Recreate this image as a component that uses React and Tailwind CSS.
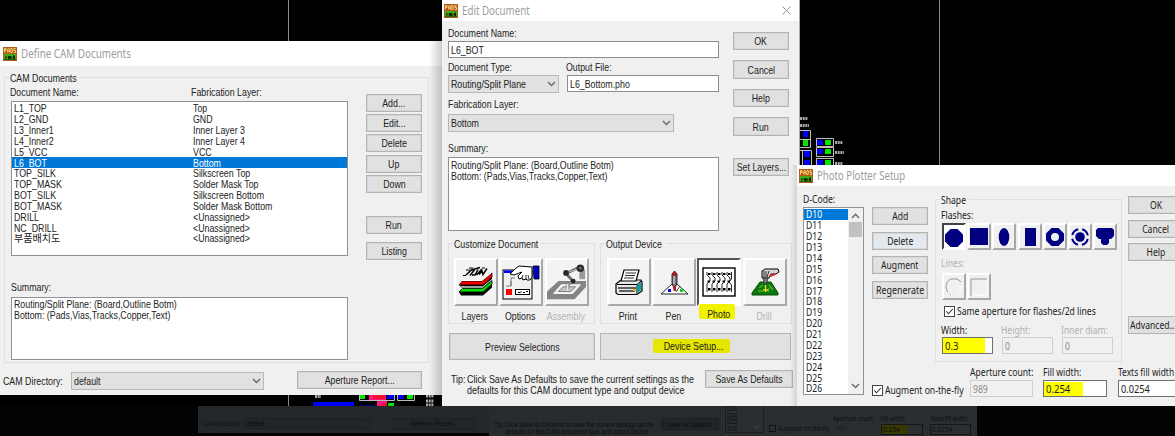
import React from "react";
import clsx from "clsx";

/* ---------- text ---------- */
const T = ({ children, className = "scale-x-[0.84]", origin = "origin-left" }) => (
  <span className={clsx("inline-block whitespace-pre", origin, className)}>{children}</span>
);

/* ---------- basic controls ---------- */
const Button = ({ children, className, text }) => (
  <div className={clsx("flex shrink-0 items-center justify-center border border-[#b4b4b4] bg-[#e1e1e1] shadow-[inset_0_0_0_1px_#d6d6d6]", className)}>
    <T origin="origin-center" className={text}>{children}</T>
  </div>
);

const Field = ({ children, className, text }) => (
  <div className={clsx("flex shrink-0 items-center border pl-[2px]", className)}>
    <T className={text}>{children}</T>
  </div>
);

const Chevron = ({ up, className }) => (
  <svg className={className} width="9" height="6" viewBox="0 0 9 6" fill="none" stroke="#6a6a6a" strokeWidth="1.4">
    <path d={up ? "M1 5 4.500 1.200 8 5" : "M1 1 4.500 4.600 8 1"} />
  </svg>
);

const Select = ({ children, className }) => (
  <div className={clsx("flex shrink-0 items-center justify-between border border-[#b8b8b8] bg-[#e1e1e1] pl-[2px] pr-[2px]", className)}>
    <T>{children}</T>
    <Chevron />
  </div>
);

const Check = ({ children, text }) => (
  <div className="flex h-[12px] items-center gap-[2px]">
    <svg className="shrink-0" width="11" height="11" viewBox="0 0 11 11">
      <rect x=".5" y=".5" width="10" height="10" fill="#fff" stroke="#444" />
      <path d="M2.300 5.400 4.500 7.800 8.800 3" fill="none" stroke="#333" strokeWidth="1.100" />
    </svg>
    <T className={text}>{children}</T>
  </div>
);

const PadsIcon = () => (
  <svg width="14" height="14" viewBox="0 0 14 14" className="shrink-0">
    <rect width="14" height="14" fill="#b4581c" />
    <rect x="1" y="7" width="12" height="6" fill="#3fae12" />
    <path d="M1.500 5.500V1.500H3V3.500H1.500M4.700 5.500V2L5.500 1.500 6.300 2V5.500M4.700 4H6.300M7.800 1.500V5.500H9L9.600 4.500V2.500L9 1.500ZM12.500 1.500H11V3.500H12.500V5.500H11" fill="none" stroke="#ffdf7a" strokeWidth=".9" />
    <path d="M2 9.500H3.500V11.500H2ZM5 9H8.500V12H5ZM10 8.500H12V12.500H10Z" fill="#142a08" />
    <path d="M3.500 10H5M8.500 10.500H10M1 12.500H13" stroke="#1a4a0a" strokeWidth=".7" />
  </svg>
);

const TitleBar = ({ title, className, text, close }) => (
  <div className={clsx("flex shrink-0 items-center bg-white text-[12px] text-[#9d9d9d] font-['Noto_Sans',sans-serif]", className)}>
    <PadsIcon />
    <div className="ml-[4px] flex-1">
      <T className={text}>{title}</T>
    </div>
    {close && (
      <svg width="9" height="9" viewBox="0 0 9 9" className="mr-[8px]" stroke="#8c8c8c" strokeWidth="1">
        <path d="M.5.5 8.500 8.500M8.500.5.5 8.500" />
      </svg>
    )}
  </div>
);

const Group = ({ label, className, children, text, labelWidth }) => (
  <div className={clsx("flex shrink-0 flex-col border border-[#dfdfdf]", className)}>
    <div className={clsx("-mt-[6px] ml-[5px] flex h-[12px] shrink-0 items-center bg-[#f0f0f0]", labelWidth)}>
      <T className={text}>{label}</T>
    </div>
    {children}
  </div>
);

/* ---------- CAM documents window ---------- */
const docs = [
  ["L1_TOP", "Top"],
  ["L2_GND", "GND"],
  ["L3_Inner1", "Inner Layer 3"],
  ["L4_Inner2", "Inner Layer 4"],
  ["L5_VCC", "VCC"],
  ["L6_BOT", "Bottom"],
  ["TOP_SILK", "Silkscreen Top"],
  ["TOP_MASK", "Solder Mask Top"],
  ["BOT_SILK", "Silkscreen Bottom"],
  ["BOT_MASK", "Solder Mask Bottom"],
  ["DRILL", "<Unassigned>"],
  ["NC_DRILL", "<Unassigned>"],
  ["부품배치도", "<Unassigned>"],
];

const CamDocuments = () => (
  <div className="absolute left-0 top-[41px] flex h-[354px] w-[442px] flex-col bg-[#f0f0f0]">
    <TitleBar title="Define CAM Documents" className="h-[25px] pl-[3px]" text="scale-x-[0.82]" />
    <Group label="CAM Documents" labelWidth="w-[69px]" className="ml-[4px] mt-[11px] h-[286px] w-[425px]">
      <div className="flex">
        <div className="ml-[6px] flex w-[337px] flex-col">
          <div className="mt-[2px] flex h-[12px] items-center">
            <div className="-ml-px w-[181px]"><T>Document Name:</T></div>
            <T>Fabrication Layer:</T>
          </div>
          <div className="mt-[3px] h-[155px] border border-[#8d9198] bg-white pt-px leading-[10px]">
            {docs.map(([name, layer], i) => (
              <div key={name} className={clsx("flex h-[10.84px] items-center pl-[2px]", i === 5 && "bg-[#0078d7] text-white")}>
                <div className="w-[179px]"><T className={i === 12 ? "scale-x-[0.96]" : undefined}>{name}</T></div>
                <T>{layer}</T>
              </div>
            ))}
          </div>
          <div className="mt-[25px] flex h-[12px] items-center"><T>Summary:</T></div>
          <div className="mt-[4px] flex h-[63px] flex-col border border-[#8d9198] bg-white pl-[2px] pt-px leading-[11px]">
            <T>Routing/Split Plane: (Board,Outline Botm)</T>
            <T>Bottom: (Pads,Vias,Tracks,Copper,Text)</T>
          </div>
        </div>
        <div className="ml-[18px] mt-[10px] flex flex-col">
          <Button className="h-[18px] w-[56px]">Add...</Button>
          <Button className="mt-[2px] h-[18px] w-[56px]">Edit...</Button>
          <Button className="mt-[2px] h-[18px] w-[56px]">Delete</Button>
          <Button className="mt-[3px] h-[18px] w-[56px]">Up</Button>
          <Button className="mt-[2px] h-[18px] w-[56px]">Down</Button>
          <Button className="mt-[23px] h-[18px] w-[56px]">Run</Button>
          <Button className="mt-[8px] h-[18px] w-[56px]">Listing</Button>
        </div>
      </div>
    </Group>
    <div className="mt-[8px] flex pl-[3px]">
      <div className="flex w-[68px] items-center"><T>CAM Directory:</T></div>
      <Select className="mt-px h-[18px] w-[193px]">default</Select>
      <Button className="ml-[33px] h-[18px] w-[125px]">Aperture Report...</Button>
    </div>
    <div className="absolute right-0 top-0 h-full w-[13px] bg-linear-to-r from-black/0 to-black/20" />
  </div>
);

/* ---------- tool icons ---------- */
const LayersIcon = () => (
  <svg width="36" height="34" viewBox="0 0 36 34">
    <path d="M1 27H25L34 19V22.500L25 30.500H3Z" fill="#000" />
    <path d="M1 27 4.500 23.500H24.500L34 15.500V19L25 27Z" fill="#00e000" stroke="#000" strokeWidth=".8" />
    <path d="M2 20H25L34 12V15.500L25 22.500H3Z" fill="#000" />
    <path d="M3 21.800H24.800L34 14.400" stroke="#fff" strokeWidth=".9" fill="none" />
    <path d="M1 20 4.500 16H24L34 8V12L25 20Z" fill="#f00000" stroke="#000" strokeWidth=".8" />
    <path d="M4 15.500H24L33 8" stroke="#fff" fill="none" />
    <path d="M8 10 14 4.500 16 5.500 12 10.500M14 10H17L20 4.500M15 4.500 22 2.500M18.500 10 24 4M21 9.500 24 6 25 9.500 29 3.500" fill="none" stroke="#000" strokeWidth="1.500" />
    <path d="M8 5H12M11 3H15M24 3H27M5 10.500H8" stroke="#000" />
  </svg>
);

const OptionsIcon = () => (
  <svg width="38" height="36" viewBox="0 0 38 36">
    <rect x="1" y="6" width="29" height="29" fill="#f0f0f0" stroke="#000" />
    <path d="M2 6.500H12V9H2Z" fill="#00f" />
    <path d="M4 22H9V17M9 22V14H13" fill="none" stroke="#777" />
    <rect x="4" y="25" width="6" height="6" fill="#f00" />
    <rect x="13.500" y="25.500" width="14" height="5" fill="#fff" stroke="#000" />
    <path d="M16 28.500H18M19 27.500V29M21 28.500H23M24 27.500H26" stroke="#000" />
    <path d="M8 10 13 5 17 2 30 3V13L28 16H25L24 15 21 16 20 14 17 15 16 12 20 8 12 11Z" fill="#fff" stroke="#000" />
    <path d="M20 14 21 11M24 15 24 11M27 15 26 11" stroke="#000" strokeWidth=".8" />
    <path d="M31 2H37V15H32Z" fill="#0000e0" stroke="#000" strokeWidth=".8" />
    <path d="M34 2V15" stroke="#000070" />
  </svg>
);

const AssemblyIcon = () => (
  <svg width="42" height="38" viewBox="0 0 42 38">
    <path d="M0 29 12 18H41V24L29 37H0Z" fill="#858585" />
    <path d="M7 31 15 22H35L27 31Z" fill="#eee" stroke="#fff" />
    <path d="M12 29 17 24H30L25 29Z" fill="#c4c4c4" stroke="#666" strokeWidth=".8" />
    <path d="M34 6H40V16H34Z" fill="#999" />
    <path d="M20 10 35 3M20 10 27 18 22 22" fill="none" stroke="#6c6c6c" strokeWidth="3" />
    <path d="M22 9 35 4M27 18 22 22" fill="none" stroke="#c7c7c7" strokeWidth="1" />
    <circle cx="20" cy="9.500" r="3" fill="#282828" />
    <circle cx="35" cy="4.500" r="4" fill="#303030" />
    <circle cx="27.500" cy="18" r="2.500" fill="#222" />
    <circle cx="35" cy="4.500" r="1.200" fill="#888" />
    <path d="M21.500 21V28" stroke="#f5f5f5" strokeWidth="2" />
    <path d="M20.500 21V27M23 21V27" stroke="#777" strokeWidth=".6" />
  </svg>
);

const PrintIcon = () => (
  <svg width="28" height="27" viewBox="0 0 28 27">
    <path d="M1 15 6 11H26L27 13V22L22 25.500H3L1 24Z" fill="#e8e8e8" stroke="#000" strokeWidth="1.200" />
    <path d="M6 12 9 1H24L21 12Z" fill="#fff" stroke="#000" strokeWidth="1.200" />
    <path d="M10.500 4H21M10 6.500H20M9 9H19" stroke="#333" />
    <path d="M2 15.500H22L26 12M22 15.500V25" fill="none" stroke="#000" />
    <path d="M22.500 16 26 13V21L22.500 24Z" fill="#00a0a8" />
    <path d="M3 19H21M4 22H20" stroke="#333" strokeWidth="1.400" />
    <rect x="18" y="20" width="3" height="2" fill="#ddc71e" />
  </svg>
);

const PenIcon = () => (
  <svg width="29" height="25" viewBox="0 0 29 25">
    <path d="M1 24 12 14H17L28 24Z" fill="#fff" stroke="#222" />
    <path d="M12 4 14.500 1 17 4V13L14.500 20 12 13Z" fill="#777" stroke="#000" strokeWidth=".8" />
    <path d="M13 2H16V6H13ZM13.500 16H16V21H13.500Z" fill="#c1121e" />
    <path d="M14 6V14" stroke="#ddd" />
    <rect x="8" y="19" width="3" height="3" fill="#00f" />
    <rect x="20" y="19" width="3" height="3" fill="#00d800" />
    <path d="M16 22 20 16" stroke="#444" />
  </svg>
);

const PhotoIcon = () => (
  <svg width="34" height="30" viewBox="0 0 34 30" className="shrink-0">
    <rect x="1" y="1" width="32" height="28" fill="#fff" stroke="#000" strokeWidth="1.400" />
    <path d="M5 5V8L8 11V14L5 17V25M10 5V8L13 11V14L10 17V25M15 5V8L18 11V14L15 17V25M20 5V8L23 11V14L20 17V25M25 5V8L28 11V14L25 17V25M29.500 5V12L27 15 29.500 18V25" stroke="#111" fill="none" strokeWidth=".9" />
    {[7, 12, 17, 22, 27].map((x) => (
      <path key={x} d={`M${x - 1} 6h2.500v2h-2.500zM${x - 1.5} 13.500h2.500v2h-2.500zM${x - 1} 21h2.500v2.500h-2.500z`} fill="#000" />
    ))}
  </svg>
);

const DrillIcon = () => (
  <svg width="29" height="28" viewBox="0 0 29 28">
    <path d="M1 25 9 14H20L27 25V27H1Z" fill="#08780a" stroke="#064c08" />
    <path d="M8 20 12 17M18 17 22 22M7 23H12M18 20 17 24" stroke="#4caf2a" strokeWidth="1.500" />
    <path d="M11 3 14 1H27L28 4 25 6H20L18 10H11Z" fill="#d5d5d5" stroke="#000" />
    <path d="M13 3V9M15 3V9M18 3 16 9" stroke="#333" />
    <path d="M19 8 24 6" stroke="#e01e28" strokeWidth="2" />
    <path d="M12 10H17L16 14 14.500 18 13 14Z" fill="#777" stroke="#222" strokeWidth=".7" />
    <path d="M14.500 17V24M12 22H17" stroke="#e7d619" strokeWidth="1.500" />
  </svg>
);

const Tool = ({ icon, label, pressed, disabled, marked, width }) => (
  <div className={clsx("flex shrink-0 flex-col", width)}>
    <div
      className={clsx(
        "flex h-[48px] w-[44px] shrink-0 items-center justify-center border-2",
        pressed ? "border-b-white border-l-[#555] border-r-white border-t-[#555] bg-white" : "border-b-[#a8a8a8] border-l-white border-r-[#a8a8a8] border-t-white bg-[#f3f3f3]",
      )}
    >
      {icon}
    </div>
    <div
      className={clsx(
        "relative flex h-[15px] w-[36px] items-center justify-center",
        disabled && "text-[#b5b5b5]",
        marked ? "-mt-[2px] ml-[2px] rounded-[2px] bg-[#f2f200] pl-[4px] pt-[7px] pb-[2px]" : "ml-[3px] pt-[5px]",
      )}
    >
      <T origin="origin-center">{label}</T>
    </div>
  </div>
);

/* ---------- edit document window ---------- */
const EditDocument = () => (
  <div className="absolute left-[442px] top-0 flex h-[406px] w-[358px] flex-col border-r border-[#a9a9a9] bg-[#f0f0f0]">
    <TitleBar title="Edit Document" className="h-[21px] pl-[2px]" text="scale-x-[0.81]" close />
    <div className="flex pl-[6px]">
      <div className="flex w-[271px] flex-col">
        <div className="mt-[6px] flex h-[12px] items-center"><T>Document Name:</T></div>
        <Field className="mt-[2px] h-[17px] border-[#8d8d8d] bg-white">L6_BOT</Field>
        <div className="mt-[3px] flex h-[12px] items-center">
          <div className="w-[118px]"><T>Document Type:</T></div>
          <T>Output File:</T>
        </div>
        <div className="mt-[2px] flex">
          <Select className="h-[18px] w-[111px]">Routing/Split Plane</Select>
          <Field className="ml-[8px] h-[17px] w-[152px] border-[#8d8d8d] bg-white">L6_Bottom.pho</Field>
        </div>
        <div className="mt-[5px] flex h-[12px] items-center"><T>Fabrication Layer:</T></div>
        <Select className="mt-[4px] h-[18px] w-[226px]">Bottom</Select>
        <div className="mt-[10px] flex h-[12px] items-center"><T>Summary:</T></div>
        <div className="mt-[3px] flex h-[74px] flex-col border border-[#8d9198] bg-white pl-[2px] pt-[2px] leading-[11px]">
          <T>Routing/Split Plane: (Board,Outline Botm)</T>
          <T>Bottom: (Pads,Vias,Tracks,Copper,Text)</T>
        </div>
      </div>
      <div className="ml-[14px] mt-[11px] flex flex-col">
        <Button className="h-[18px] w-[56px]">OK</Button>
        <Button className="mt-[10px] h-[19px] w-[56px]">Cancel</Button>
        <Button className="mt-[10px] h-[18px] w-[56px]">Help</Button>
        <Button className="mt-[10px] h-[19px] w-[56px]">Run</Button>
        <Button className="mt-[22px] h-[18px] w-[56px]">Set Layers...</Button>
      </div>
    </div>
    <div className="mt-[12px] flex gap-[5px] pl-[6px]">
      <Group label="Customize Document" labelWidth="w-[86px]" className="h-[81px] w-[147px]">
        <div className="mt-[8px] flex pl-[5px]">
          <Tool icon={<LayersIcon />} label="Layers" width="w-[45px]" />
          <Tool icon={<OptionsIcon />} label="Options" width="w-[46px]" />
          <Tool icon={<AssemblyIcon />} label="Assembly" width="w-[44px]" disabled />
        </div>
      </Group>
      <Group label="Output Device" labelWidth="w-[60px]" className="h-[81px] w-[192px]">
        <div className="mt-[8px] flex pl-[6px]">
          <Tool icon={<PrintIcon />} label="Print" width="w-[45px]" />
          <Tool icon={<PenIcon />} label="Pen" width="w-[45px]" />
          <Tool icon={<PhotoIcon />} label="Photo" width="w-[46px]" pressed marked />
          <Tool icon={<DrillIcon />} label="Drill" width="w-[44px]" disabled />
        </div>
      </Group>
    </div>
    <div className="mt-[9px] flex gap-[5px] pl-[7px]">
      <Button className="h-[27px] w-[146px]">Preview Selections</Button>
      <div className="flex h-[27px] w-[191px] items-center justify-center border border-[#b4b4b4] bg-[#e1e1e1]">
        <div className="-mt-px mr-[9px] flex h-[14px] w-[77px] items-center justify-center rounded-[2px] bg-[#e6e600] pl-[6px]">
          <T origin="origin-center">Device Setup...</T>
        </div>
      </div>
    </div>
    <div className="flex pl-[9px]">
      <div className="mt-[14px] flex w-[16px] flex-col leading-[11px]"><T>Tip:</T></div>
      <div className="mt-[14px] flex w-[238px] flex-col leading-[11px]">
        <T className="scale-x-[0.853]">Click Save As Defaults to save the current settings as the</T>
        <T className="scale-x-[0.853]">defaults for this CAM document type and output device</T>
      </div>
      <Button className="mt-[10px] h-[18px] w-[88px]">Save As Defaults</Button>
    </div>
    <div className="absolute right-0 top-[165px] h-[241px] w-[9px] bg-linear-to-r from-black/0 to-black/15" />
  </div>
);

/* ---------- photo plotter window ---------- */
const codes = Array.from({ length: 17 }, (_, i) => `D${i + 10}`);

const shapes = [
  <path d="M5.500 0H12.500L18 5.500V12.500L12.500 18H5.500L0 12.500V5.500Z" />,
  <rect x="0" y="0" width="18" height="17" />,
  <ellipse cx="9" cy="9" rx="5.300" ry="9" />,
  <rect x="4" y="0" width="11" height="18" />,
  <path fillRule="evenodd" d="M5.500 0H12.500L18 5.500V12.500L12.500 18H5.500L0 12.500V5.500ZM9 5A4 4 0 1 0 9 13 4 4 0 1 0 9 5Z" />,
  <g>
    <circle cx="9" cy="9" r="4.800" />
    <circle cx="9" cy="9" r="8" fill="none" stroke="#000080" strokeWidth="2" strokeDasharray="8.560 4" strokeDashoffset="-2" />
  </g>,
  <path d="M2 0H16L18 2V8L15 11H13V15L11 17H7L5 15V11H3L0 8V2Z" />,
];

const Raised = ({ pressed, children }) => (
  <div className={clsx("flex h-[27px] w-[24px] shrink-0 items-center justify-center border-2", pressed ? "border-b-white border-l-[#444] border-r-white border-t-[#444] bg-white pt-[2px]" : "border-b-[#a8a8a8] border-l-white border-r-[#a8a8a8] border-t-white bg-[#f0f0f0]")}>
    {children}
  </div>
);

const N = "scale-x-[0.86]";

const PhotoPlotter = () => (
  <div className="absolute left-[797px] top-[165px] flex h-[241px] w-[378px] flex-col bg-[#f0f0f0]">
    <TitleBar title="Photo Plotter Setup" className="h-[21px] pl-[2px]" text="scale-x-[0.80]" />
    <div className="flex font-['Noto_Sans',sans-serif] text-[10px]">
      <div className="ml-[6px] flex w-[61px] shrink-0 flex-col">
        <div className="mt-[7px] flex h-[12px] items-center"><T className={N}>D-Code:</T></div>
        <div className="mt-[2px] flex h-[188px] border border-[#8d9198] bg-white leading-[10px]">
          <div className="flex w-[44px] flex-col pt-px">
            {codes.map((c, i) => (
              <div key={c} className={clsx("flex h-[10.88px] shrink-0 items-center pl-[2px]", i === 0 && "bg-[#0078d7] text-white")}>
                <T className={N}>{c}</T>
              </div>
            ))}
          </div>
          <div className="flex flex-1 flex-col items-center bg-[#f0f0f0] py-[5px]">
            <Chevron up />
            <div className="mt-[3px] h-[15px] w-[13px] bg-[#c1c1c1]" />
            <Chevron className="mt-auto" />
          </div>
        </div>
      </div>
      <div className="ml-[8px] flex w-[303px] shrink-0 flex-col">
        <div className="flex">
          <div className="mt-[21px] flex flex-col">
            <Button text={N} className="h-[18px] w-[56px]">Add</Button>
            <Button text={N} className="mt-[7px] h-[18px] w-[56px] border-[#9fb6cc] bg-[#e4e9ee]">Delete</Button>
            <Button text={N} className="mt-[6px] h-[18px] w-[56px] border-[#9fb6cc]">Augment</Button>
            <Button text="scale-x-[0.89]" className="mt-[7px] h-[18px] w-[56px]">Regenerate</Button>
          </div>
          <Group label="Shape" text={N} labelWidth="w-[28px]" className="ml-[7px] mt-[13px] h-[163px] w-[187px]">
            <div className="mt-[2px] flex h-[14px] items-center pl-[5px]"><T className={N}>Flashes:</T></div>
            <div className="mt-px flex gap-[1.2px] pl-[6px]">
              {shapes.map((s, i) => (
                <Raised key={i} pressed={i === 0}>
                  <svg width="18" height="18" viewBox="0 0 18 18" fill="#000080" className="shrink-0">{s}</svg>
                </Raised>
              ))}
            </div>
            <div className="mt-[7px] flex h-[12px] items-center pl-[5px] text-[#b0b0b0]"><T className={N}>Lines:</T></div>
            <div className="mt-[4px] flex gap-[1px] pl-[6px]">
              <Raised>
                <svg width="18" height="18" viewBox="0 0 18 18" fill="none" className="shrink-0">
                  <path d="M6 17Q1 14 1 9 1 3 6 1H12L16 4" stroke="#999" />
                  <path d="M13 16Q17 13 17 7M7 17 3 14" stroke="#fff" />
                </svg>
              </Raised>
              <Raised>
                <svg width="18" height="18" viewBox="0 0 18 18" fill="none" className="shrink-0">
                  <path d="M1 18V1H17" stroke="#999" />
                  <path d="M17 2V17H2" stroke="#fff" />
                </svg>
              </Raised>
            </div>
            <div className="mt-[5px] pl-[8px]"><Check text={N}>Same aperture for flashes/2d lines</Check></div>
            <div className="mt-[7px] flex h-[12px] items-center pl-[5px]">
              <div className="w-[60px]"><T className={N}>Width:</T></div>
              <div className="w-[60px] text-[#b0b0b0]"><T className={N}>Height:</T></div>
              <div className="text-[#b0b0b0]"><T className={N}>Inner diam:</T></div>
            </div>
            <div className="mt-px flex gap-[9px] pl-[6px]">
              <div className="flex h-[17px] w-[51px] items-center border border-[#707070] bg-white">
                <div className="flex h-[15px] w-[42px] items-center bg-[#ffff00] pl-[2px]"><T className="scale-x-[0.95]">0.3</T></div>
              </div>
              <Field text={N} className="h-[17px] w-[51px] border-[#cfcfcf] text-[#8a8a8a]">0</Field>
              <Field text={N} className="h-[17px] w-[51px] border-[#cfcfcf] text-[#8a8a8a]">0</Field>
            </div>
          </Group>
          <div className="ml-[6px] mt-[10px] flex w-[47px] flex-col overflow-hidden">
            <Button text={N} className="h-[18px] w-[56px]">OK</Button>
            <Button text={N} className="mt-[6px] h-[18px] w-[56px]">Cancel</Button>
            <Button text={N} className="mt-[5px] h-[18px] w-[56px]">Help</Button>
            <div className="mt-[55px] flex h-[18px] w-[56px] items-center border border-[#b4b4b4] bg-[#e1e1e1] pl-px">
              <T className="scale-x-[0.86]">Advanced...</T>
            </div>
          </div>
        </div>
        <div className="mt-[3px] flex">
          <div className="mt-[19px] w-[98px]"><Check text={N}>Augment on-the-fly</Check></div>
          <div className="flex w-[73px] flex-col">
            <div className="flex h-[14px] items-center"><T className={N}>Aperture count:</T></div>
            <Field text={N} className="mt-px h-[17px] w-[63px] border-[#cfcfcf] text-[#8a8a8a]">989</Field>
          </div>
          <div className="flex w-[75px] flex-col">
            <div className="flex h-[14px] items-center"><T className={N}>Fill width:</T></div>
            <div className="mt-px flex h-[17px] w-[64px] items-center border border-[#707070] bg-white">
              <div className="flex h-[14px] w-[39px] items-center bg-[#ffff00] pl-[2px]"><T className="scale-x-[0.95]">0.254</T></div>
            </div>
          </div>
          <div className="flex w-[57px] shrink-0 flex-col">
            <div className="flex h-[14px] items-center"><T className="scale-x-[0.84]">Texts fill width</T></div>
            <Field text="scale-x-[0.92]" className="mt-px h-[17px] w-[64px] border-[#707070] bg-white">0.0254</Field>
          </div>
        </div>
      </div>
    </div>
  </div>
);

/* ---------- circuit board canvas ---------- */
const Board = () => (
  <svg className="absolute left-0 top-0" width="1175" height="436" viewBox="0 0 1175 436">
    <path d="M288.500 0V41M288.500 395V406M939.500 0V165" stroke="#8a8a8a" />
    <g fill="none" stroke="#c0c0c0">
      <path d="M800 130.500H810.500V147.500H800M800 139.500H810M800 150.500H811.500V165M802.500 150V165" />
      <path d="M816.500 138.500H833.500V146.500H816.500ZM816.500 147.500H833.500V156.500H816.500ZM816.500 158.500H833.500V168H816.500Z" />
    </g>
    <path d="M803 131H808V137H803ZM804 151H810V157H804ZM804 160H810V165H804ZM817 140H823V145H817ZM817 149H823V154H817ZM817 160H823V165H817Z" fill="#0000f4" />
    <path d="M803 140H808V146H803ZM825 140H831V145H825ZM825 149H831V154H825ZM825 160H831V165H825Z" fill="#00e800" />
    <g stroke="#a8a8a8" strokeWidth="3" strokeDasharray="2 .7">
      <path d="M800 118.500H808M800 125.500H809M835 142.500H843M835 152.500H844M835 163.500H843M315 396.500H321M426 396H434M426 401H434M426 405H434" />
    </g>
    <path d="M313 402H354V406H313ZM387 395H394V399H387ZM398 395H404V399H398ZM362 405.500H374V406H362Z" fill="#0000f4" />
    <path d="M360 395H365V399H360ZM407 395H413V399H407ZM388 403H394V406H388Z" fill="#00e800" />
    <path d="M369 395H386V400H369ZM377 400H387V406H377Z" fill="#ff1080" />
    <path d="M373 395H385V399H373ZM382 403H387V406H382Z" fill="#f01030" />
    <path d="M359.500 395V400.500H394.500V395M397.500 395V400.500H414.500V395" fill="none" stroke="#bbb" />
  </svg>
);

/* ---------- dim reflection strip under the windows ---------- */
const S = "scale-x-[0.84]";
const Reflection = () => (
  <div className="absolute left-0 top-[406px] flex h-[30px] w-[1175px] bg-[#030303] pl-[198px] text-[7px] leading-[7px] text-[#0b0c0d]">
    <div className="flex h-[27px] w-[291px] shrink-0 items-center bg-[#25282b] pl-[4px] pt-[8px]">
      <div className="w-[42px]"><T className={S}>CAM Directory:</T></div>
      <div className="flex h-[11px] w-[127px] items-center justify-between border border-[#1d1f22] bg-[#222528] px-[2px]">
        <T className={S}>default</T>
        <Chevron className="h-[4px] w-[6px] opacity-30" />
      </div>
      <div className="ml-[22px] flex h-[12px] w-[82px] items-center justify-center border border-[#1d1f22] bg-[#222528]"><T className={S} origin="origin-center">Aperture Report...</T></div>
    </div>
    <div className="flex h-[30px] w-[234px] shrink-0 bg-[#282b2e] pl-[5px]">
      <div className="mt-[15px] w-[11px]"><T className={S}>Tip:</T></div>
      <div className="mt-[15px] flex w-[156px] flex-col">
        <T className={S}>Click Save As Defaults to save the current settings as the</T>
        <T className={S}>defaults for this CAM document type and output device</T>
      </div>
      <div className="mt-[12px] flex h-[12px] w-[58px] shrink-0 items-center justify-center border border-[#1d1f22] bg-[#222528]"><T className={S} origin="origin-center">Save As Defaults</T></div>
    </div>
    <div className="flex h-[30px] w-[254px] shrink-0 bg-[#2b2e31] pl-[2px] font-['Noto_Sans',sans-serif] text-[6.500px]">
      <div className="flex h-[27px] w-[39px] shrink-0 border-x border-b border-[#1a1c1e] pl-[1px] leading-[6.500px]">
        <div className="flex w-[27px] flex-col">
          {codes.slice(13).map((c) => <T key={c} className={S}>{c}</T>)}
        </div>
        <Chevron className="mb-[3px] mt-auto h-[4px] w-[6px] opacity-50" />
      </div>
      <div className="ml-[5px] mt-[19px] flex w-[64px] shrink-0 items-start gap-[2px]">
        <span className="h-[7px] w-[7px] shrink-0 border border-[#111]" />
        <T className={N}>Augment on-the-fly</T>
      </div>
      <div className="mt-[9px] flex w-[48px] shrink-0 flex-col gap-[3px]"><T className={N}>Aperture count:</T><span className="pl-[2px] opacity-50">989</span></div>
      <div className="mt-[9px] flex w-[49px] shrink-0 flex-col gap-[2px]">
        <T className={N}>Fill width:</T>
        <div className="h-[11px] w-[42px] border border-[#151719]"><div className="flex h-[9px] w-[26px] items-center bg-[#383900] pl-[1px]">0.254</div></div>
      </div>
      <div className="mt-[9px] flex w-[42px] shrink-0 flex-col gap-[2px]">
        <T className={N}>Texts fill width:</T>
        <div className="flex h-[11px] w-[41px] items-center border border-[#151719] pl-[1px]">0.0254</div>
      </div>
    </div>
  </div>
);

export default function App() {
  return (
    <div className="relative h-[436px] w-[1175px] overflow-hidden bg-black font-['Liberation_Sans','Noto_Sans_CJK_KR',sans-serif] text-[10.500px] leading-[12px] text-[#222]">
      <Board />
      <CamDocuments />
      <EditDocument />
      <PhotoPlotter />
      <Reflection />
    </div>
  );
}
